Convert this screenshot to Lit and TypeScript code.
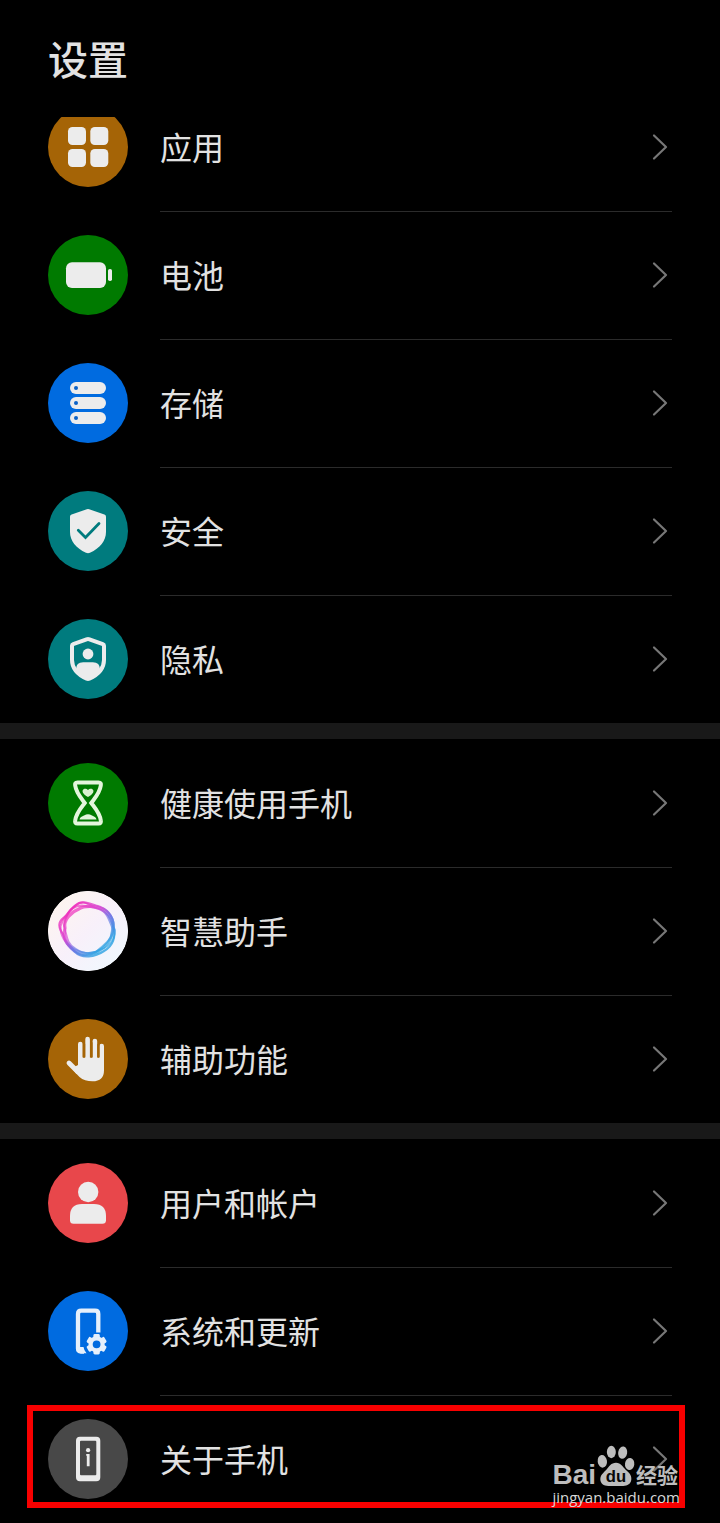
import { LitElement, html, css, svg, TemplateResult } from "lit";
import { customElement, property } from "lit/decorators.js";
import { classMap } from "lit/directives/class-map.js";

type IconName =
  | "apps" | "battery" | "storage" | "security" | "privacy" | "balance"
  | "assistant" | "accessibility" | "users" | "system" | "about";

interface Entry {
  icon: IconName;
  label: string;
  marked?: boolean;
}

const GROUPS: Entry[][] = [
  [
    { icon: "apps", label: "应用" },
    { icon: "battery", label: "电池" },
    { icon: "storage", label: "存储" },
    { icon: "security", label: "安全" },
    { icon: "privacy", label: "隐私" },
  ],
  [
    { icon: "balance", label: "健康使用手机" },
    { icon: "assistant", label: "智慧助手" },
    { icon: "accessibility", label: "辅助功能" },
  ],
  [
    { icon: "users", label: "用户和帐户" },
    { icon: "system", label: "系统和更新" },
    { icon: "about", label: "关于手机", marked: true },
  ],
];

const gearTeeth = [0, 60, 120, 180, 240, 300];

const GLYPHS: Record<IconName, TemplateResult> = {
  apps: svg`
    <rect x="20" y="20" width="18" height="18" rx="4.5"/>
    <rect x="42.3" y="20" width="18" height="18" rx="4.5"/>
    <rect x="20" y="42" width="18" height="18" rx="4.5"/>
    <rect x="42.3" y="42" width="18" height="18" rx="4.5"/>`,
  battery: svg`
    <rect x="18" y="27.3" width="40" height="25.6" rx="6"/>
    <rect x="60" y="34" width="4" height="12" rx="1.8"/>`,
  storage: svg`
    <rect x="22" y="19" width="36" height="12" rx="6"/>
    <rect x="22" y="34" width="36" height="12" rx="6"/>
    <rect x="22" y="49" width="36" height="12" rx="6"/>
    <g fill="#0b62c8"><circle cx="28" cy="25" r="2"/><circle cx="28" cy="40" r="2"/><circle cx="28" cy="55" r="2"/></g>`,
  security: svg`
    <path d="M38.8 18.3q1.2-.6 2.4 0l15.2 5.2q1.6.6 1.6 2.3V41c0 9-6 16-16 20.8q-2 .8-4 0C28 57 22 50 22 41V25.800q0-1.700 1.600-2.300z"/>
    <path d="M30.300 39.300l7.200 7.100L51 32.600" fill="none" stroke="#007b7e" stroke-width="2.800" stroke-linecap="round"/>`,
  privacy: svg`
    <path d="M39.200 20.200q.8-.4 1.600 0l14 4.900q1.200.4 1.200 1.600V41c0 8-5.500 14.500-14.700 18.800q-1.300.6-2.600 0C29.500 55.500 24 49 24 41V26.700q0-1.200 1.200-1.600z" fill="none" stroke="#ececec" stroke-width="4"/>
    <circle cx="40" cy="35" r="5.400"/>
    <path d="M28 52v-1.500q0-7.200 7.200-7.200h9.600q7.200 0 7.200 7.200V52q-5 6-12 9-7-3-12-9z"/>`,
  balance: svg`
    <path d="M29.500 19.400H50.500q3 0 2.300 3.200C51.800 30 47.500 34.500 43.300 40 47.500 45.500 51.800 50 52.800 57.400q.7 3.200-2.300 3.200H29.500q-3 0-2.300-3.200C28.200 50 32.500 45.500 36.700 40 32.500 34.500 28.200 30 27.200 22.600q-.7-3.200 2.300-3.200z" fill="none" stroke="#e4f6dc" stroke-width="4"/>
    <path d="M40 34c-3.500-2-6-4-5.300-6.700.6-2 3.700-2.200 5.300-.2 1.600-2 4.700-1.800 5.300.2.700 2.700-1.800 4.700-5.300 6.700z" fill="#d9f2cf"/>
    <path d="M31.500 56.500c.3-2.500 2.500-2.800 4.500-4 3-1.800 5-1.800 8 0 2 1.200 4.200 1.500 4.500 4z" fill="#e4f6dc"/>`,
  assistant: svg`
    <defs>
      <linearGradient id="halo" x1="0" y1="0" x2="1" y2="1">
        <stop offset="0" stop-color="#fff6ec"/><stop offset=".5" stop-color="#f8f0fa"/><stop offset="1" stop-color="#eefaff"/>
      </linearGradient>
      <linearGradient id="ring" x1=".15" y1=".15" x2=".8" y2=".85">
        <stop offset="0" stop-color="#ee30bc"/><stop offset=".35" stop-color="#d745d2"/><stop offset=".6" stop-color="#6f70e4"/><stop offset="1" stop-color="#2ba2e2"/>
      </linearGradient>
    </defs>
    <circle cx="40" cy="40" r="40" fill="url(#halo)"/>
    <g fill="none" stroke="url(#ring)">
      <path d="M28 14C33 9 40 12 48 14.500 58 17 66 24 65.500 36 68 46 65 55 56 60 47 66 34 68 27 61 20 56 17 50 15 43 8 34 12 29 18 25 21 20 24 17 28 14z" stroke-width="2.200" opacity=".8"/>
      <path d="M31 18C37 14 49 15 56 18.500 63 24 67 31 64.500 40 64 48 58 56 49 61 41 64 33 63 26 59 17 53 15 45 17 37 15 29 23 21 31 18z" stroke-width="3.200" opacity=".7"/>
      <path d="M25 17C32 12 41 16 50 17.500 59 20 61 29 65 38 65 48 56 54 48 61 39 66 30 65 24 57 18 53 12 44 12.500 35 15 28 19 22 25 17z" stroke-width="2.200" opacity=".65"/>
      <path d="M29 13.500C36 8 41 15 53 19 62 23 63 31 67 39 67 49 61 56 53 58.500 43 64 34 62 28 58 18 53 19 43 16 35 17 26 22 17 29 13.500z" stroke-width="1.800" opacity=".65"/>
    </g>`,
  accessibility: svg`
    <g fill="none" stroke="#ececec" stroke-width="4.600" stroke-linecap="round">
      <path d="M32.300 25V46M39.600 20V44M46.900 22V44M53.700 27V48"/>
      <path d="M21 44l8.500 8.500" stroke-width="4.800"/>
    </g>
    <path d="M30 38.500h26V51.500q0 10.800-11.500 10.800-8 0-13-4.300-3.500-3-7.500-8.800l6-3.200z"/>
    <path d="M36 25v12.600M43.300 24v13.600M50.400 26v11.600" stroke="#a56406" stroke-width="2.400" stroke-linecap="round"/>`,
  users: svg`
    <circle cx="40.200" cy="29" r="10.200"/>
    <path d="M22 53q0-12 12-12H46q12 0 12 12V57.200q0 3.600-3.600 3.600H25.600q-3.600 0-3.600-3.600z"/>`,
  system: svg`
    <path d="M50.300 41.500V23q0-3.300-3.300-3.300H33.300Q30 19.700 30 23V57.500q0 3 3 3H36" fill="none" stroke="#e6f0fb" stroke-width="4.300"/>
    <path d="M30 56h5.500q.5 3.500 3 6.300H32z" fill="#e6f0fb"/>
    <g fill="#e6f0fb">
      ${gearTeeth.map((a) => svg`<rect x="45.400" y="43.100" width="6.400" height="6" rx="1.400" transform="rotate(${a} 48.600 53.300)"/>`)}
    </g>
    <circle cx="48.600" cy="53.300" r="6" fill="#006be0" stroke="#e6f0fb" stroke-width="4.200"/>`,
  about: svg`
    <path fill-rule="evenodd" d="M32 17.700H48.300q4 0 4 4V58.300q0 4-4 4H32q-4 0-4-4V21.700q0-4 4-4zM33 21.700q-1 0-1 1V55.200q0 1 1 1H47.300q1 0 1-1V22.700q0-1-1-1z"/>
    <circle cx="40.100" cy="31.200" r="2.100"/>
    <path d="M38.200 35h3.400V47.200H38.800V36.800h-.6z"/>`,
};

@customElement("settings-row")
class SettingsRow extends LitElement {
  @property() icon: IconName = "apps";
  @property() label = "";
  @property({ type: Boolean }) divided = false;

  static styles = css`
    :host { display: block; }
    .row {
      display: flex;
      align-items: center;
      gap: 32px;
      height: 128px;
      padding: 0 48px;
      color: #e2e2e2;
      text-decoration: none;
    }
    .badge {
      flex: none;
      width: 80px;
      height: 80px;
      border-radius: 50%;
      overflow: hidden;
      fill: #ececec;
    }
    .apps, .accessibility { background: #a56406; }
    .battery, .balance { background: #007a00; }
    .storage, .system { background: #006be0; }
    .security, .privacy { background: #007b7e; }
    .assistant { background: #fff; }
    .users { background: #e8474b; }
    .about { background: #484848; }
    .body {
      box-sizing: border-box;
      flex: 1;
      display: flex;
      align-items: center;
      justify-content: space-between;
      height: 128px;
      padding-bottom: 2px;
      border-top: 1px solid transparent;
    }
    .divided { border-top-color: #2b2b2b; }
    .label { padding-bottom: 2px; font-size: 32px; line-height: 48px; }
    .chevron {
      width: 24px;
      height: 32px;
      fill: none;
      stroke: #777;
      stroke-width: 2.2;
      stroke-linecap: round;
      stroke-linejoin: round;
    }
  `;

  render() {
    return html`
      <a class="row" href="#${this.icon}">
        <svg class="badge ${this.icon}" viewBox="0 0 80 80" aria-hidden="true">${GLYPHS[this.icon]}</svg>
        <span class=${classMap({ body: true, divided: this.divided })}>
          <span class="label">${this.label}</span>
          <svg class="chevron" viewBox="0 0 24 32" aria-hidden="true"><path d="M6 4.500L18 16 6 27.500"/></svg>
        </span>
      </a>`;
  }
}

@customElement("site-mark")
class SiteMark extends LitElement {
  static styles = css`
    :host { display: block; color: #bdbdbd; width: max-content; }
    .brand {
      display: flex;
      align-items: flex-end;
      justify-content: flex-end;
      height: 42px;
      padding-right: 2px;
    }
    .latin { font: 700 28px/24px "Liberation Sans", sans-serif; }
    .paw { width: 40px; height: 42px; fill: #bdbdbd; }
    .du { font: 700 50px "Liberation Sans", sans-serif; fill: #080808; }
    .han { font: 700 21px/26px "Noto Sans CJK SC", sans-serif; }
    .site { font: 400 15px/20px "Open Sans", sans-serif; color: #d8d8d8; }
  `;

  render() {
    return html`
      <div class="brand">
        <span class="latin">Bai</span>
        <svg class="paw" viewBox="195 180 120 126" aria-hidden="true">
          <ellipse cx="214" cy="229" rx="14" ry="19" transform="rotate(-8 214 229)"/>
          <ellipse cx="241" cy="201" rx="13.500" ry="18.500"/>
          <ellipse cx="275" cy="203" rx="13.500" ry="18.500" transform="rotate(10 275 203)"/>
          <ellipse cx="296" cy="237" rx="14" ry="18" transform="rotate(8 296 237)"/>
          <path d="M255 233c15 0 20 12 29 21 9 8 18 15 17 29-1 14-12 20-24 20h-45c-14 0-24-7-24-20 0-14 10-20 18-29 9-10 14-21 29-21z"/>
          <text class="du" x="255" y="291" text-anchor="middle">du</text>
        </svg>
        <span class="han">经验</span>
      </div>
      <div class="site">jingyan.baidu.com</div>`;
  }
}

@customElement("app-root")
class AppRoot extends LitElement {
  static styles = css`
    :host {
      display: block;
      background: #000;
      color: #e2e2e2;
      font-family: "Noto Sans CJK SC", sans-serif;
    }
    .header {
      box-sizing: border-box;
      height: 117px;
      padding: 30px 48px 0;
    }
    .title { margin: 0; font-size: 40px; line-height: 56px; font-weight: 500; }
    .list { overflow: hidden; }
    .scrolled { margin-top: -34px; }
    .group { list-style: none; margin: 0; padding: 0; }
    .group + .group { border-top: 16px solid #191919; }
    .item { position: relative; }
    .frame {
      position: absolute;
      inset: 10px 35px 15px 27px;
      border: 6px solid #f80000;
      pointer-events: none;
    }
    .mark {
      position: absolute;
      right: 40px;
      bottom: 16px;
      pointer-events: none;
    }
  `;

  render() {
    return html`
      <header class="header"><h1 class="title">设置</h1></header>
      <main class="list">
        <div class="scrolled">
          ${GROUPS.map((group) => html`
            <ul class="group">
              ${group.map((entry, i) => html`
                <li class="item">
                  <settings-row .icon=${entry.icon} .label=${entry.label} .divided=${i > 0}></settings-row>
                  ${entry.marked ? html`<div class="frame"></div><site-mark class="mark"></site-mark>` : null}
                </li>`)}
            </ul>`)}
        </div>
      </main>`;
  }
}
